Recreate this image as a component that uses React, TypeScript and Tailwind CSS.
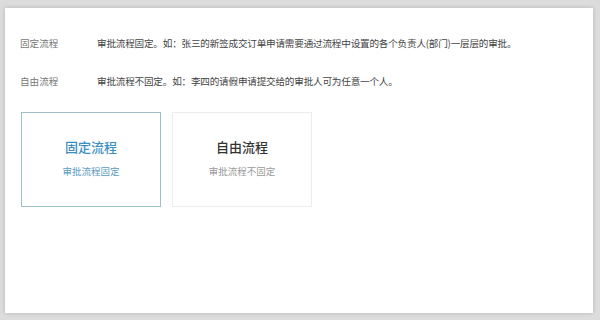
import React from "react";

const rows = [
  {
    label: "固定流程",
    text: "审批流程固定。如：张三的新签成交订单申请需要通过流程中设置的各个负责人(部门)一层层的审批。",
  },
  {
    label: "自由流程",
    text: "审批流程不固定。如：李四的请假申请提交给的审批人可为任意一个人。",
  },
];

const App = () => {
  return (
    <div
      className="w-[600px] h-[320px] bg-[#dcdcdc] pl-[5px] pt-[8px] pr-[7px] pb-[7px]"
      style={{ fontFamily: '"Noto Sans CJK SC", "Noto Sans", sans-serif' }}
    >
      <div className="w-full h-full bg-white shadow-[0_0_4px_rgba(0,0,0,0.18)] pl-[15px] pt-[25px]">
        <div className="flex flex-col gap-[18px]">
          {rows.map((r) => (
            <div key={r.label} className="flex items-center h-[20px] text-[9.6px]">
              <span className="w-[77px] text-[#777]">{r.label}</span>
              <span className="text-[#444] tracking-[-0.2px]">{r.text}</span>
            </div>
          ))}
        </div>
        <div className="flex gap-[11px] mt-[21px] pl-[1px]">
          <div className="w-[140px] h-[95px] border border-[#9fc0c8] flex flex-col items-center justify-center pb-[3px]">
            <div className="text-[13px] font-medium text-[#3b8ec0] leading-none">固定流程</div>
            <div className="text-[9.5px] text-[#5a9cc4] mt-[14px] leading-none">审批流程固定</div>
          </div>
          <div className="w-[140px] h-[95px] border border-[#ececec] flex flex-col items-center justify-center pb-[3px]">
            <div className="text-[13px] font-medium text-[#333] leading-none">自由流程</div>
            <div className="text-[9.5px] text-[#999] mt-[14px] leading-none">审批流程不固定</div>
          </div>
        </div>
      </div>
    </div>
  );
};

export default App;
